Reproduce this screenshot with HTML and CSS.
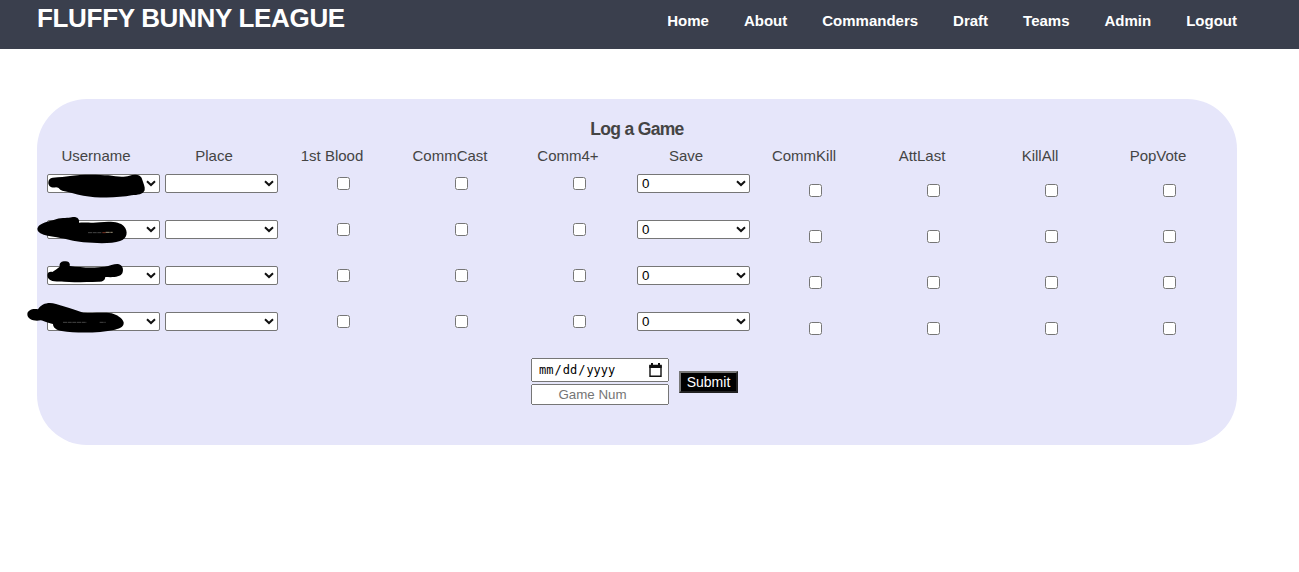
FILE: index.html
```html
<!DOCTYPE html>
<html lang="en">
<head>
<meta charset="utf-8">
<title>Fluffy Bunny League</title>
<link rel="stylesheet" href="styles.css">
</head>
<body>
<header class="site-header">
  <h1 class="brand">FLUFFY BUNNY LEAGUE</h1>
  <nav class="nav"><a>Home</a><a>About</a><a>Commanders</a><a>Draft</a><a>Teams</a><a>Admin</a><a>Logout</a></nav>
</header>
<main class="panel">
  <h2 class="panel-title">Log a Game</h2>
  <div class="labels"><span>Username</span><span>Place</span><span>1st Blood</span><span>CommCast</span><span>Comm4+</span><span>Save</span><span>CommKill</span><span>AttLast</span><span>KillAll</span><span>PopVote</span></div>
  <form class="game-form">
    <div class="row">
      <div class="user"><select><option></option></select>
        <svg class="scribble" width="150" height="40" viewBox="0 0 450 120"><path d="M98 38 C120 36 135 36 150 33 C185 27 240 29 265 31 C290 35 310 38 328 32 C345 26 364 30 366 42 C370 55 376 65 374 76 C370 88 353 90 335 91 C295 99 235 100 190 92 C165 87 145 80 127 77 C119 76 119 68 108 67 C93 70 85 62 85 53 C85 44 90 39 98 38Z"/></svg></div>
      <select><option></option></select><input type="checkbox"><input type="checkbox"><input type="checkbox"><select><option>0</option></select><input class="low" type="checkbox"><input class="low" type="checkbox"><input class="low" type="checkbox"><input class="low" type="checkbox">
    </div>
    <div class="row">
      <div class="user"><select><option></option></select>
        <svg class="scribble second" width="150" height="40" viewBox="0 0 450 120"><path d="M54 51 C62 39 82 36 108 28 C128 21 145 26 155 22 C170 19 179 26 177 38 C205 37 220 40 240 37 C275 33 300 37 311 48 C326 64 322 87 300 93 C275 102 230 100 190 97 C160 94 140 87 110 82 C91 78 73 77 61 70 C52 64 50 57 54 51Z"/><path class="mark" d="M204 68H245"/><path class="mark red" d="M247 68H257"/><path class="mark light" d="M257 67H278"/></svg></div>
      <select><option></option></select><input type="checkbox"><input type="checkbox"><input type="checkbox"><select><option>0</option></select><input class="low" type="checkbox"><input class="low" type="checkbox"><input class="low" type="checkbox"><input class="low" type="checkbox">
    </div>
    <div class="row">
      <div class="user"><select><option></option></select>
        <svg class="scribble third" width="150" height="40" viewBox="0 0 450 120"><path d="M97 42 C105 37 112 31 119 26 C117 12 128 9 138 10 C148 11 151 18 149 24 C185 29 225 30 254 26 C270 23 283 17 294 18 C308 20 312 34 307 46 C300 58 280 58 256 57 C255 68 247 72 235 71 C195 72 145 74 103 70 C86 67 80 58 83 47 C85 42 91 40 97 42Z"/></svg></div>
      <select><option></option></select><input type="checkbox"><input type="checkbox"><input type="checkbox"><select><option>0</option></select><input class="low" type="checkbox"><input class="low" type="checkbox"><input class="low" type="checkbox"><input class="low" type="checkbox">
    </div>
    <div class="row">
      <div class="user"><select><option></option></select>
        <svg class="scribble fourth" width="150" height="40" viewBox="0 0 450 120"><path d="M54 31 C65 12 88 8 108 15 C135 23 160 31 190 41 C220 43 250 40 275 43 C291 48 306 56 311 70 C312 82 303 88 285 92 C235 103 170 103 125 96 C107 93 99 85 99 75 C82 72 73 66 62 64 C42 68 22 61 22 46 C22 34 37 28 54 31Z"/><path class="mark" d="M129 70H200M239 70H257"/></svg></div>
      <select><option></option></select><input type="checkbox"><input type="checkbox"><input type="checkbox"><select><option>0</option></select><input class="low" type="checkbox"><input class="low" type="checkbox"><input class="low" type="checkbox"><input class="low" type="checkbox">
    </div>
    <div class="submit-row">
      <div class="details"><input class="date" type="date"><input class="number" type="number" placeholder="Game Num"></div>
      <button class="submit" type="button">Submit</button>
    </div>
  </form>
</main>
</body>
</html>
```
FILE: styles.css
```css
* { box-sizing: border-box; }
body { margin: 0; background: #fff; color: #444; font: 15px "Liberation Sans", Arial, sans-serif; }
.site-header { display: flex; justify-content: space-between; height: 49px; padding: 0 62px 0 37px; background: #3a3f4d; color: #fff; }
.brand { margin: 3px 0 0; font-size: 26px; line-height: 30px; font-weight: bold; letter-spacing: -0.32px; white-space: nowrap; }
.nav { display: flex; gap: 35px; padding-top: 12px; font-weight: bold; line-height: 18px; }
.panel { width: 1200px; height: 346px; margin: 50px 0 0 37px; padding-top: 20px; border-radius: 50px; background: #e6e6fa; }
.panel-title { margin: 0; font-size: 17.55px; line-height: 20px; letter-spacing: -0.7px; text-align: center; }
.labels { display: grid; grid-template-columns: repeat(10, 118px); margin-top: 8px; line-height: 18px; text-align: center; }
.game-form { padding: 9px 0 0 10px; }
.row { display: grid; grid-template-columns: repeat(10, 118px); height: 46px; align-items: start; }
.row select { display: block; width: 113px; height: 19px; margin: 0; padding: 0 4px; appearance: none; border: 1px solid #767676; border-radius: 2px; color: #000; background: #fff url("data:image/svg+xml,%3Csvg xmlns='http://www.w3.org/2000/svg' width='10' height='7' viewBox='0 0 10 7'%3E%3Cpath d='M1 1.2L5 5L9 1.2' fill='none' stroke='%23111' stroke-width='2'/%3E%3C/svg%3E") no-repeat 98px 5px; font: 13.333px "Liberation Sans", Arial, sans-serif; }
.row input { width: 13px; height: 13px; margin: 3px 0 0 54px; }
.row .low { margin-top: 10px; }
.user { position: relative; }
.scribble { position: absolute; left: -27px; top: -9px; }
.second { top: -10px; }
.third { top: -8px; }
.fourth { top: -13px; }
.mark { fill: none; stroke: #666; stroke-width: 2; stroke-dasharray: 12 2; }
.red { stroke: #b54832; }
.light { stroke: #e5d7b4; }
.submit-row { display: flex; align-items: center; gap: 10px; margin-left: 484px; }
.details { display: flex; flex-direction: column; gap: 2px; width: 138px; }
.details input { width: 138px; margin: 0; text-align: center; }
.details .date { height: 24px; padding: 1px 5px; text-align: left; font: 12px monospace; }
.date::-webkit-calendar-picker-indicator { width: 13px; height: 15px; margin: 0; padding: 0; background: url("data:image/svg+xml,%3Csvg xmlns='http://www.w3.org/2000/svg' width='13' height='15' viewBox='0 0 13 15'%3E%3Cpath d='M1 3V13.3H12V3Z' fill='none' stroke='%23111' stroke-width='1.4'/%3E%3Cpath d='M.3 1.7H12.7V5H.3ZM2 0H4V2H2ZM9 0H11V2H9Z' fill='%23111'/%3E%3C/svg%3E") no-repeat center / 13px 15px; }
.number { height: 21px; font: 13.333px "Liberation Sans", Arial, sans-serif; }
.submit { width: 59px; height: 22px; padding: 0; border: 2px outset #777; background: #000; color: #fff; font: 14px "Liberation Sans", Arial, sans-serif; }
```
